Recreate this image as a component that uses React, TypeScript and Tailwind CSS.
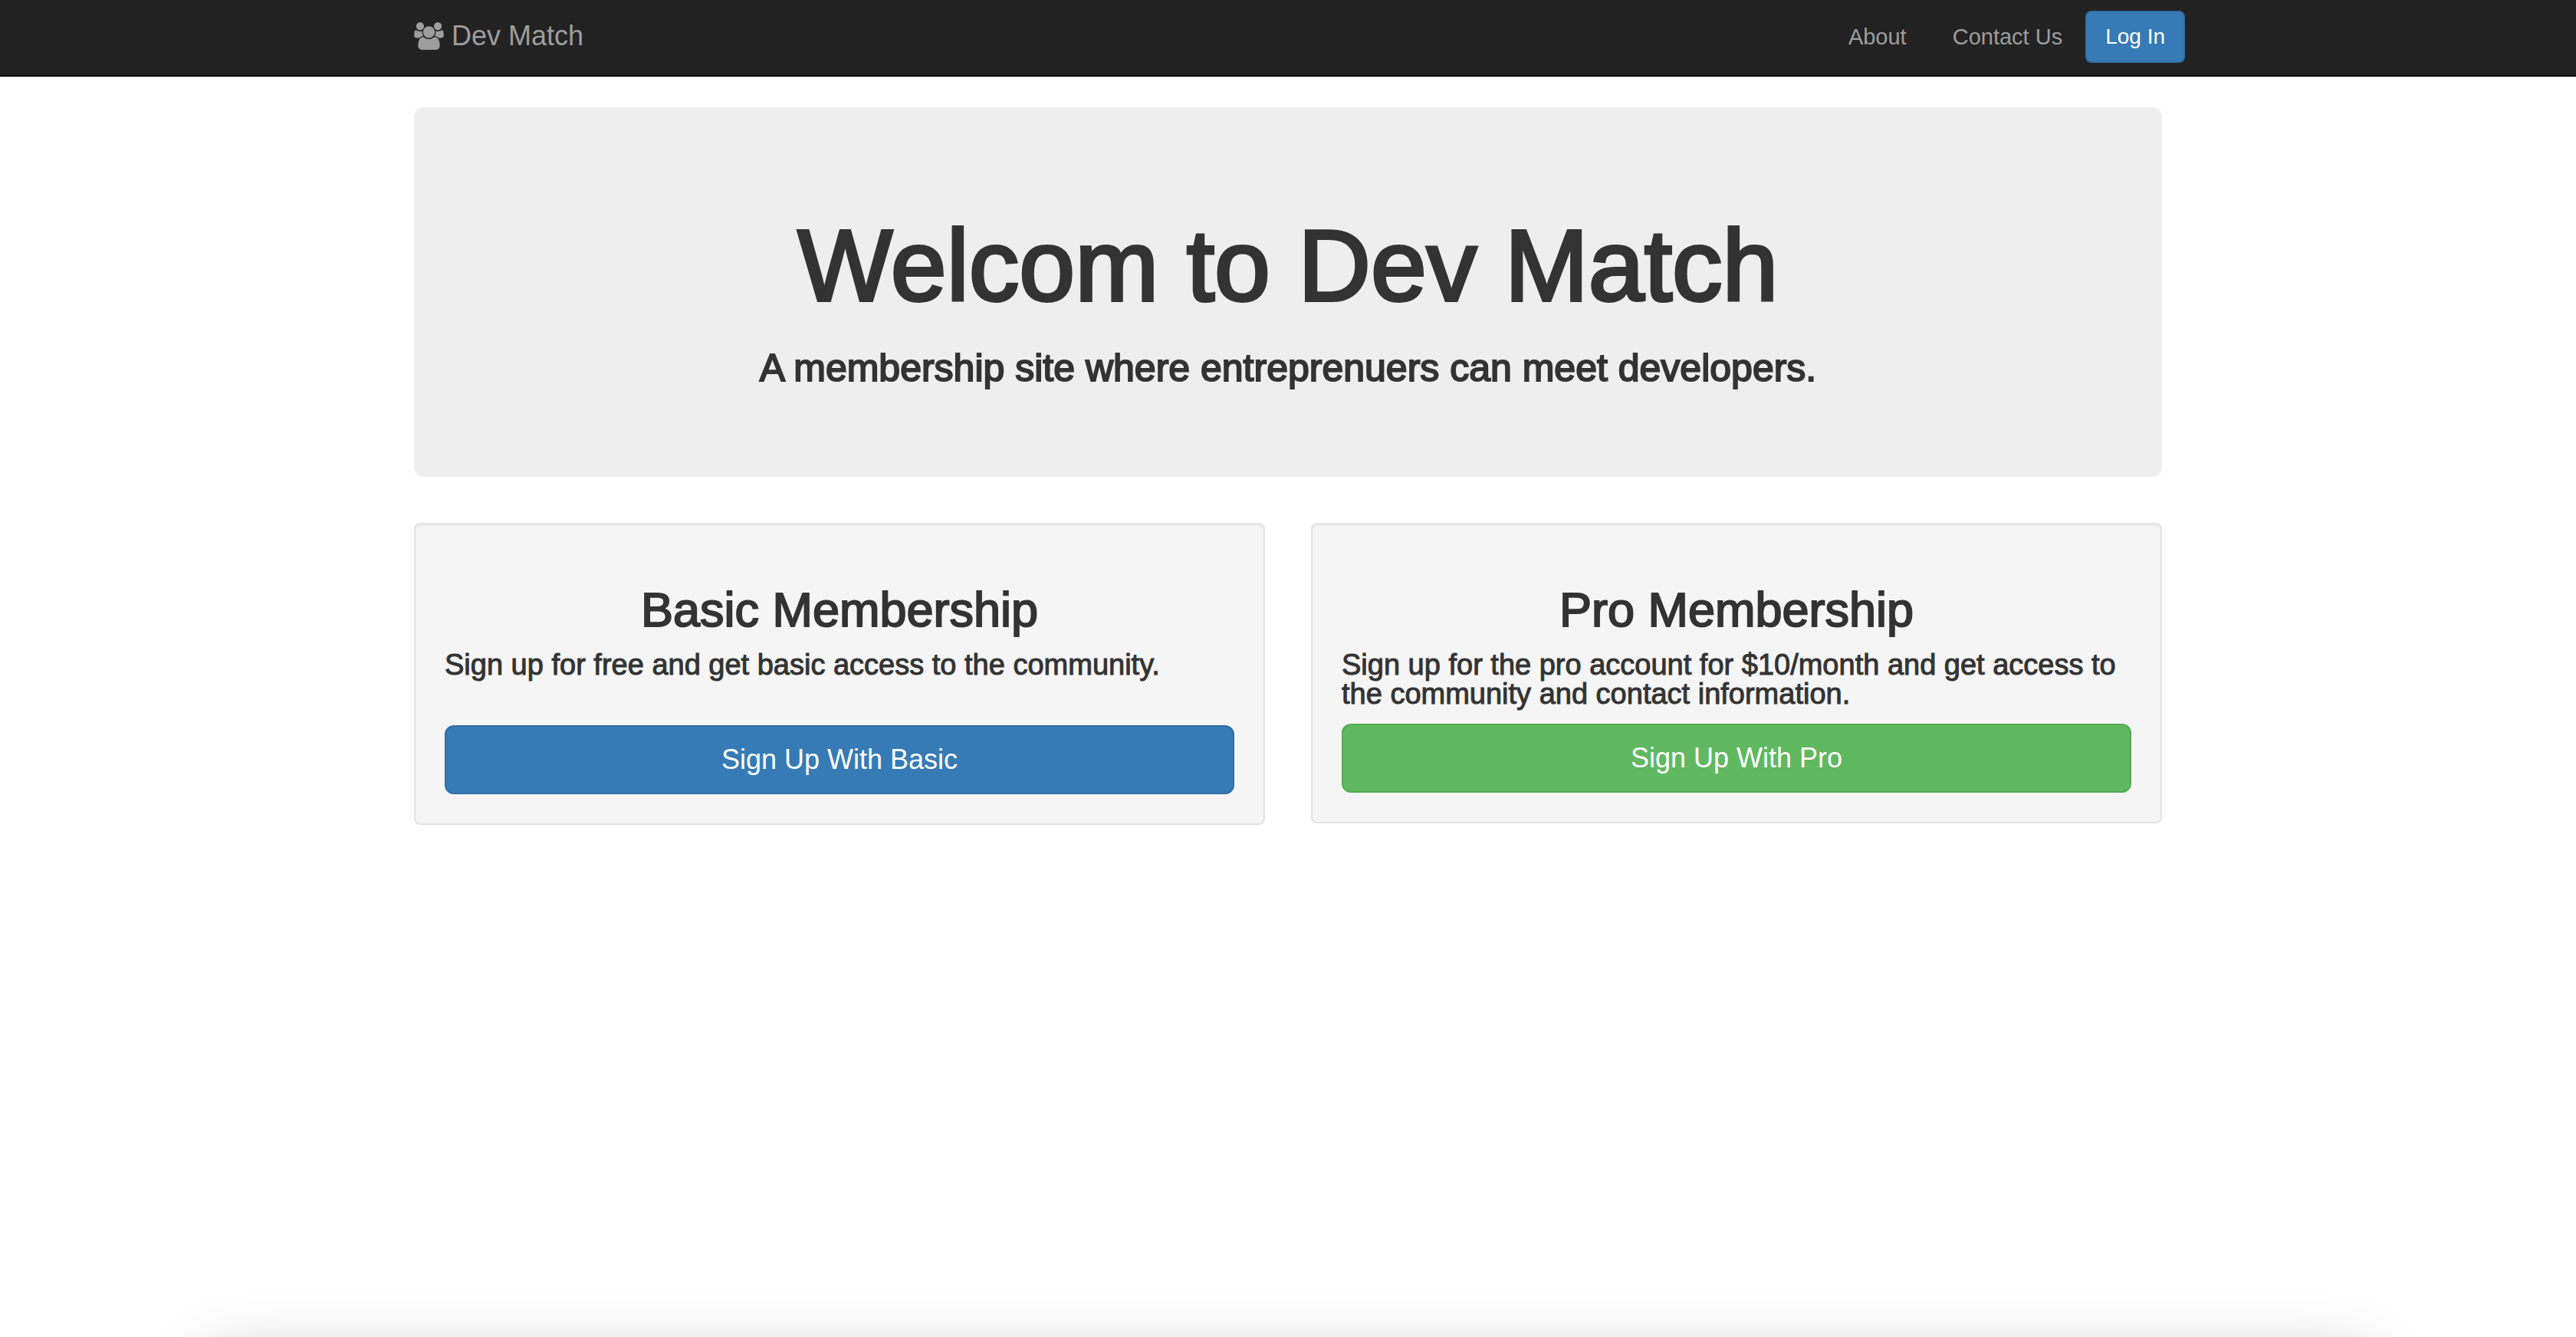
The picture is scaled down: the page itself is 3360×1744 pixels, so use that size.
import React from "react";

function UsersIcon() {
  return (
    <svg viewBox="0 0 1920 1792" className="h-9 w-[39px]" fill="currentColor" aria-hidden="true">
      <path d="M593 896q-162 5-265 128H194q-82 0-138-40.5T0 865q0-353 124-353 6 0 43.5 21t97.5 42.5T384 597q67 0 133-23-5 37-5 66 0 139 81 256zm1071 637q0 120-73 189.5t-194 69.5H523q-121 0-194-69.5T256 1533q0-53 3.5-103.5t14-109T300 1212t43-97.5 62-81 85.5-53.5T602 960q10 0 43 21.5t73 48 107 48 135 21.5 135-21.5 107-48 73-48 43-21.5q61 0 111.5 20t85.5 53.5 62 81 43 97.5 26.5 108.5 14 109 3.5 103.5zM640 256q0 106-75 181t-181 75-181-75-75-181 75-181T384 0t181 75 75 181zm704 384q0 159-112.5 271.5T960 1024 688.5 911.5 576 640t112.5-271.5T960 256t271.5 112.5T1344 640zm576 225q0 78-56 118.5t-138 40.5h-134q-103-123-265-128 81-117 81-256 0-29-5-66 66 23 133 23 59 0 119-21.5t97.5-42.5 43.5-21q124 0 124 353zm-128-609q0 106-75 181t-181 75-181-75-75-181 75-181 181-75 181 75 75 181z" />
    </svg>
  );
}

function Navbar() {
  return (
    <nav className="border-b-2 border-[#080808] bg-[#222222] text-[#9d9d9d]">
      <div className="mx-auto flex h-[98px] max-w-[2340px] items-center justify-between pb-[2px] pl-[30px]">
        <a href="#home" className="flex items-center gap-[10px] pb-[2px] text-[36px] leading-10">
          <UsersIcon />
          <span>Dev Match</span>
        </a>
        <div className="flex items-center text-[29px] leading-10">
          <a href="#about" className="px-[30px]">About</a>
          <a href="#contact" className="px-[30px]">Contact Us</a>
          <button
            type="button"
            className="rounded-lg border-2 border-[#2e6da4] bg-[#367bb5] px-6 py-3 text-[28px] leading-10 text-white"
          >
            Log In
          </button>
        </div>
      </div>
    </nav>
  );
}

type PlanProps = {
  title: string;
  text: string;
  action: string;
  actionClass: string;
};

function Plan({ title, text, action, actionClass }: PlanProps) {
  return (
    <section className="rounded-lg border-2 border-[#e3e3e3] bg-[#f5f5f5] p-[38px] shadow-[inset_0_2px_2px_rgba(0,0,0,0.05)]">
      <h2 className="mt-10 text-center text-[63px] leading-[66px] [-webkit-text-stroke:2px]">{title}</h2>
      <p className="mt-5 text-[38px] leading-[38px] [-webkit-text-stroke:1px]">{text}</p>
      <button
        type="button"
        className={`h-[90px] w-full rounded-xl border-2 text-[36px] text-white ${actionClass}`}
      >
        {action}
      </button>
    </section>
  );
}

export default function App() {
  return (
    <div className="relative min-h-screen overflow-hidden bg-white font-['Liberation_Sans',Arial,sans-serif] text-[#333333]">
      <Navbar />
      <main className="mx-auto max-w-[2340px] px-[30px] pt-10">
        <header className="rounded-xl bg-[#eeeeee] px-[120px] pt-[138px] pb-[116px] text-center">
          <h1 className="text-[131px] leading-[138px] [-webkit-text-stroke:4px]">Welcom to Dev Match</h1>
          <p className="mt-[38px] text-[50px] leading-[52px] [-webkit-text-stroke:2px]">
            A membership site where entreprenuers can meet developers.
          </p>
        </header>
        <div className="mt-[60px] grid grid-cols-2 items-start gap-[60px]">
          <Plan
            title="Basic Membership"
            text="Sign up for free and get basic access to the community."
            action="Sign Up With Basic"
            actionClass="mt-[60px] border-[#2e6da4] bg-[#367bb5]"
          />
          <Plan
            title="Pro Membership"
            text="Sign up for the pro account for $10/month and get access to the community and contact information."
            action="Sign Up With Pro"
            actionClass="mt-5 border-[#4fae50] bg-[#60b860]"
          />
        </div>
      </main>
      <div className="absolute inset-x-[270px] -bottom-[220px] h-[200px] shadow-[0_0_80px_rgba(0,0,0,0.2)]" />
    </div>
  );
}
